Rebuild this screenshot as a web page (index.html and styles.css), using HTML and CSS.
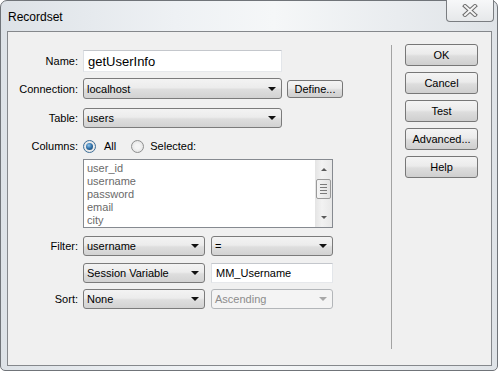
FILE: index.html
```html
<!DOCTYPE html>
<html lang="en">
<head>
  <meta charset="UTF-8" />
  <title>Recordset</title>
  <link rel="stylesheet" href="styles.css">
</head>
<body>
<div class="window">
  <div class="titlebar">
    <span class="title">Recordset</span>
    <div class="close">
      <svg width="16" height="13" viewBox="0 0 16 13">
        <path d="M3 2 L13 11 M13 2 L3 11" stroke="#6c6c6c" stroke-width="4" stroke-linecap="square" fill="none"/>
        <path d="M3 2 L13 11 M13 2 L3 11" stroke="#f4f4f4" stroke-width="2" stroke-linecap="square" fill="none"/>
      </svg>
    </div>
  </div>

  <div class="client">
    <div class="form">
      <div class="row r-name">
        <label>Name:</label>
        <div class="text big w-wide">getUserInfo</div>
      </div>
      <div class="row r-conn">
        <label>Connection:</label>
        <div class="combo w-wide h21"><span>localhost</span><i class="arrow"></i></div>
        <div class="btn define">Define...</div>
      </div>
      <div class="row r-table">
        <label>Table:</label>
        <div class="combo w-wide"><span>users</span><i class="arrow"></i></div>
      </div>
      <div class="row r-cols">
        <label>Columns:</label>
        <span class="radio on"></span><span class="opt-all">All</span>
        <span class="radio"></span><span class="opt-sel">Selected:</span>
      </div>
      <div class="row r-list">
        <label></label>
        <div class="listbox">
          <ul class="items">
            <li>user_id</li>
            <li>username</li>
            <li>password</li>
            <li>email</li>
            <li>city</li>
          </ul>
          <div class="scroll">
            <i class="up"></i>
            <div class="thumb"><b></b><b></b><b></b><b></b></div>
            <i class="down"></i>
          </div>
        </div>
      </div>
      <div class="row r-filter">
        <label>Filter:</label>
        <div class="combo w-half"><span>username</span><i class="arrow"></i></div>
        <div class="combo w-half gap"><span>=</span><i class="arrow"></i></div>
      </div>
      <div class="row r-sess">
        <label></label>
        <div class="combo w-half"><span>Session Variable</span><i class="arrow"></i></div>
        <div class="text w-half gap">MM_Username</div>
      </div>
      <div class="row r-sort">
        <label>Sort:</label>
        <div class="combo w-half"><span>None</span><i class="arrow"></i></div>
        <div class="combo disabled w-half gap"><span>Ascending</span><i class="arrow"></i></div>
      </div>
    </div>

    <div class="sep"></div>

    <div class="actions">
      <div class="btn">OK</div>
      <div class="btn">Cancel</div>
      <div class="btn">Test</div>
      <div class="btn">Advanced...</div>
      <div class="btn">Help</div>
    </div>
  </div>
</div>
</body>
</html>
```

FILE: styles.css
```css
body {margin:0; background:#fff; font-family:"Liberation Sans", Arial, sans-serif; font-size:11px; color:#000}

.window {
  width:498px; height:371px; box-sizing:border-box;
  border:1px solid #707479; border-radius:7px 7px 5px 5px;
  background:linear-gradient(to right, #dde2e7 0%, #eef1f4 35%, #f5f7f8 55%, #e9ecef 80%, #dfe3e7 100%);
  display:flex; flex-direction:column;
}

.titlebar {height:30px; display:flex; align-items:center; padding-left:7px}
.title    {font-size:12px; color:#000; margin-top:1px}
.close {
  margin-left:auto; margin-right:3px; align-self:flex-start; margin-top:-1px;
  width:48px; height:22px; box-sizing:border-box;
  border:1px solid #7a7d81; border-top:none; border-radius:0 0 4px 4px;
  background:linear-gradient(#f7f8f9, #e6e8ea);
  display:flex; align-items:center; justify-content:center;
}

.client {
  flex:1; margin:0 5px 4px 6px;
  border:1px solid #85888c; background:#f0f0f0;
  display:flex;
}

/* form side */
.form {width:383px; padding-top:18px}
.row  {display:flex; align-items:center}
.row label {width:70px; margin-right:5px; text-align:right; flex:none}
.r-name  {height:22px}
.r-conn  {height:21px; margin-top:6px}
.r-table {height:20px; margin-top:9px}
.r-cols  {height:14px; margin-top:11px}
.r-list  {margin-top:6px; align-items:flex-start}
.r-filter{height:20px; margin-top:8px}
.r-sess  {height:20px; margin-top:7px}
.r-sort  {height:20px; margin-top:6px}

.w-wide {width:199px}
.w-half {width:122px}
.gap    {margin-left:6px}
.h21    {height:21px !important}

.text {
  box-sizing:border-box; height:20px; background:#fff;
  border:1px solid; border-color:#c4c7cc #e3e6ea #e6e8eb #dcdfe3;
  padding-left:4px; display:flex; align-items:center;
}
.text.big {height:22px; font-size:13px}

.combo {
  box-sizing:border-box; height:20px;
  border:1px solid #7b7b7b; border-radius:3px;
  background:linear-gradient(#f3f3f3 0%, #ececec 45%, #dedede 55%, #d2d2d2 100%);
  padding:0 5px 0 3px; display:flex; align-items:center; justify-content:space-between;
}
.arrow {width:0; height:0; border-left:4px solid transparent; border-right:4px solid transparent; border-top:4px solid #111}
.combo.disabled {border-color:#b3b6b9; background:#f4f4f4; color:#8c8c8c}
.combo.disabled .arrow {border-top-color:#a8a8a8}

.btn {
  box-sizing:border-box; height:22px;
  border:1px solid #777; border-radius:3px;
  background:linear-gradient(#f4f4f4 0%, #ebebeb 45%, #dddddd 55%, #cfcfcf 100%);
  display:flex; align-items:center; justify-content:center;
}
.define {width:56px; height:18px; margin-left:5px}

/* radios */
.radio {
  width:13px; height:13px; box-sizing:border-box; border-radius:50%;
  border:1px solid #8e8f8f; background:radial-gradient(circle, #f4f4f4 30%, #dcdcdc 100%);
  position:relative; flex:none;
}
.radio.on {border-color:#3c6e98}
.radio.on::after {
  content:""; position:absolute; left:2px; top:2px; width:7px; height:7px; border-radius:50%;
  background:radial-gradient(circle at 40% 35%, #8fc6ee 0%, #2f6ea5 50%, #143c5e 100%);
}
.opt-all {margin-left:8px}
.r-cols .radio:not(.on) {margin-left:15px}
.opt-sel {margin-left:6px}

/* listbox */
.listbox {
  width:250px; height:69px; box-sizing:border-box;
  border:1px solid #868a90; background:#fff; display:flex;
}
.items {flex:1; margin:0; padding:2px 0 0 3px; list-style:none; color:#6a6a6a; line-height:13px}
.scroll {
  width:17px; background:linear-gradient(to right, #e4e4e4, #f2f2f2 40%, #e8e8e8);
  display:flex; flex-direction:column; align-items:center;
}
.scroll .up, .scroll .down {width:0; height:0; border-left:3px solid transparent; border-right:3px solid transparent}
.scroll .up   {border-bottom:3px solid #5a5a5a; margin-top:8px}
.scroll .down {border-top:3px solid #5a5a5a; margin-top:auto; margin-bottom:8px}
.thumb {
  width:15px; height:20px; box-sizing:border-box; margin-top:8px;
  border:1px solid #9a9a9a; border-radius:2px;
  background:linear-gradient(to right, #f5f5f5, #e2e2e2);
  display:flex; flex-direction:column; align-items:center; justify-content:center; gap:2px;
}
.thumb b {display:block; width:7px; height:1px; background:#7a7a7a}

/* separator and buttons */
.sep {width:1px; background:#a3a3a3; margin:13px 0 16px}
.actions {padding:12px 0 0 13px; display:flex; flex-direction:column; gap:6px}
.actions .btn {width:73px}
```
